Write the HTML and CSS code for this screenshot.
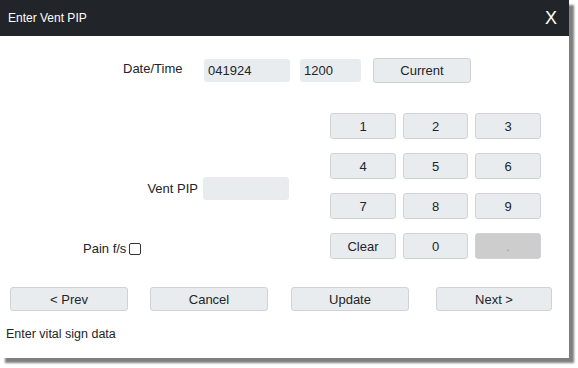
FILE: index.html
```html
<!DOCTYPE html>
<html lang="en">

<head>
    <meta charset="UTF-8">
    <meta name="viewport" content="width=device-width, initial-scale=1.0">
    <title>Enter Vent PIP</title>
    <link rel="stylesheet" href="styles.css">
</head>

<body>
    <div class="dialog">
        <div class="dialog-header">
            <span class="dialog-title">Enter Vent PIP</span>
            <span class="dialog-close">X</span>
        </div>

        <div class="dialog-body">
            <div class="datetime-row">
                <label class="datetime-label">Date/Time</label>
                <input type="text" class="field date-field" value="041924">
                <input type="text" class="field time-field" value="1200">
                <button class="btn current-btn">Current</button>
            </div>

            <div class="main-area">
                <div class="left-col">
                    <div class="vent-row">
                        <label class="vent-label">Vent PIP</label>
                        <input type="text" class="field vent-field">
                    </div>
                    <div class="pain-row">
                        <label class="pain-label">Pain f/s</label>
                        <span class="checkbox"></span>
                    </div>
                </div>

                <div class="keypad">
                    <button class="btn key">1</button>
                    <button class="btn key">2</button>
                    <button class="btn key">3</button>
                    <button class="btn key">4</button>
                    <button class="btn key">5</button>
                    <button class="btn key">6</button>
                    <button class="btn key">7</button>
                    <button class="btn key">8</button>
                    <button class="btn key">9</button>
                    <button class="btn key">Clear</button>
                    <button class="btn key">0</button>
                    <button class="btn key key-disabled">.</button>
                </div>
            </div>

            <div class="nav-row">
                <button class="btn nav-btn prev-btn">&lt; Prev</button>
                <button class="btn nav-btn cancel-btn">Cancel</button>
                <button class="btn nav-btn update-btn">Update</button>
                <button class="btn nav-btn next-btn">Next &gt;</button>
            </div>

            <div class="status">Enter vital sign data</div>
        </div>
    </div>
</body>

</html>
```

FILE: styles.css
```css
html {
    background-color: #fff;
}

body {
    margin: 0;
    padding-bottom: 10px;
    background-color: #fff;
    font-family: "Liberation Sans", Arial, sans-serif;
    font-size: 13px;
    color: #212529;
}

.dialog {
    box-sizing: border-box;
    width: 569px;
    height: 358px;
    overflow: hidden;
    background-color: #fff;
    box-shadow: 5px 5px 2px rgba(0, 0, 0, 0.5);
    display: flex;
    flex-direction: column;
}

.dialog-header {
    flex: none;
    height: 36px;
    background-color: #212529;
    color: #fff;
    display: flex;
    align-items: center;
    justify-content: space-between;
    padding: 0 12px 0 8px;
}

.dialog-title {
    font-size: 12px;
}

.dialog-close {
    font-size: 18px;
}

.dialog-body {
    flex: 1;
}

.field {
    box-sizing: border-box;
    height: 23px;
    border: none;
    border-radius: 3px;
    background-color: #e9ecef;
    font-family: inherit;
    font-size: 13px;
    color: #212529;
    padding: 0 4px;
}

.btn {
    box-sizing: border-box;
    border: 1px solid #cfd2d6;
    border-radius: 3px;
    background-color: #e9ecef;
    font-family: inherit;
    font-size: 13px;
    color: #212529;
    padding: 0;
}

.datetime-row {
    display: flex;
    align-items: center;
    margin-top: 22px;
    padding-left: 123px;
}

.datetime-label {
    width: 81px;
    margin-top: -4px;
}

.date-field {
    width: 86px;
}

.time-field {
    width: 61px;
    margin-left: 10px;
}

.current-btn {
    width: 98px;
    height: 25px;
    margin-left: 12px;
}

.main-area {
    display: flex;
    margin-top: 30px;
}

.left-col {
    width: 330px;
}

.vent-row {
    display: flex;
    align-items: center;
    justify-content: flex-end;
    padding-right: 41px;
    margin-top: 64px;
}

.vent-label {
    margin-right: 5px;
}

.vent-field {
    width: 86px;
}

.pain-row {
    display: flex;
    align-items: center;
    padding-left: 83px;
    margin-top: 41px;
}

.checkbox {
    width: 10px;
    height: 10px;
    border: 1px solid #333;
    border-radius: 2px;
    margin-left: 3px;
}

.keypad {
    display: grid;
    grid-template-columns: 66px 65px 66px;
    grid-auto-rows: 26px;
    column-gap: 7px;
    row-gap: 14px;
}

.key-disabled {
    background-color: #cdcdcd;
    color: #999;
}

.nav-row {
    display: flex;
    margin-top: 28px;
    padding-left: 10px;
}

.nav-btn {
    width: 118px;
    height: 24px;
}

.cancel-btn {
    margin-left: 22px;
}

.update-btn {
    margin-left: 23px;
}

.next-btn {
    margin-left: 27px;
    width: 116px;
}

.status {
    margin-top: 16px;
    padding-left: 6px;
    font-size: 12.5px;
}
```
